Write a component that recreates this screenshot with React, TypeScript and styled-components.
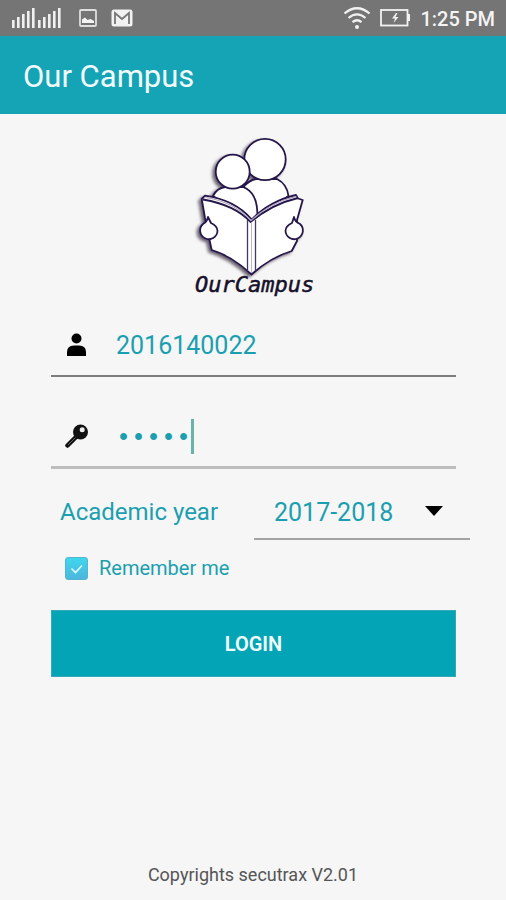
import React, { useState } from "react";
import styled, { createGlobalStyle } from "styled-components";

const teal = "#1b9fb0";

const GlobalStyle = createGlobalStyle`
  *, *::before, *::after { box-sizing: border-box; }
  body {
    margin: 0;
    background: #f6f6f6;
    font-family: Roboto, "Liberation Sans", sans-serif;
  }
`;

const Screen = styled.div`
  display: flex;
  flex-direction: column;
  min-height: 100vh;
`;

const StatusBar = styled.div`
  display: flex;
  align-items: center;
  justify-content: space-between;
  height: 36px;
  padding: 0 11px 0 12px;
  background: #757575;
  color: #f4f4f4;
`;

const StatusGroup = styled.div<{ $gap: number }>`
  display: flex;
  align-items: center;
  gap: ${({ $gap }) => $gap}px;
`;

const Clock = styled.time`
  font-size: 20px;
  font-weight: 500;
  line-height: 24px;
  padding-top: 2px;
`;

const AppBar = styled.header`
  display: flex;
  align-items: center;
  height: 78px;
  padding: 4px 23px 0;
  background: #14a4b6;
`;

const Title = styled.h1`
  margin: 0;
  color: #f2fbfc;
  font-size: 31px;
  font-weight: 400;
  line-height: 40px;
`;

const Main = styled.main`
  display: flex;
  flex: 1;
  flex-direction: column;
  padding: 16px 0 12px;
`;

const Logo = styled.svg`
  align-self: center;
`;

const Form = styled.form`
  display: flex;
  flex-direction: column;
  margin: 14px 50px 0 51px;
`;

const Field = styled.label<{ $line: string; $thick: number }>`
  display: flex;
  align-items: center;
  height: 63px;
  padding-left: 14px;
  border-bottom: ${({ $thick }) => $thick}px solid ${({ $line }) => $line};

  & + & { margin-top: 29px; }
`;

const TextInput = styled.input`
  flex: 1;
  min-width: 0;
  margin-left: 27px;
  padding: 2px 0 0;
  border: 0;
  outline: 0;
  background: transparent;
  color: ${teal};
  font: 400 25px/36px Roboto, "Liberation Sans", sans-serif;
`;

const PasswordInput = styled(TextInput)`
  flex: none;
  field-sizing: content;
  padding-top: 6px;
  font-family: "Liberation Mono", monospace;
  caret-color: transparent;
`;

const Caret = styled.span`
  width: 3px;
  height: 35px;
  background: #67b5a8;
`;

const YearRow = styled.div`
  display: flex;
  align-items: flex-start;
  justify-content: space-between;
  margin: 15px -14px 0 9px;
`;

const YearLabel = styled.label`
  color: ${teal};
  font-size: 24px;
  line-height: 56px;
`;

const SelectBox = styled.div`
  display: grid;
  align-items: center;
  width: 216px;
  border-bottom: 2px solid #a3a3a3;

  & > * { grid-area: 1 / 1; }
  & > svg { justify-self: end; margin-right: 26px; pointer-events: none; }
`;

const YearSelect = styled.select`
  width: 100%;
  height: 54px;
  padding: 4px 60px 0 20px;
  appearance: none;
  border: 0;
  outline: 0;
  background: transparent;
  color: ${teal};
  font: 400 25px/36px Roboto, "Liberation Sans", sans-serif;
`;

const Remember = styled.label`
  display: flex;
  align-items: center;
  gap: 11px;
  margin: 15px 0 0 14px;
  color: ${teal};
  font-size: 20px;
  line-height: 26px;
`;

const CheckBox = styled.span`
  display: grid;
  width: 23px;
  height: 23px;

  & > * { grid-area: 1 / 1; }
  & > svg { pointer-events: none; opacity: 0; }
  & > input:checked + svg { opacity: 1; }
`;

const Tick = styled.input`
  width: 23px;
  height: 23px;
  margin: 0;
  appearance: none;
  border: 1px solid #55b4d2;
  border-radius: 3px;
  background: linear-gradient(#3fd6ee, #4cb6dc);
`;

const LoginButton = styled.button`
  height: 67px;
  margin-top: 29px;
  padding: 0;
  border: 1px solid #35a9b5;
  background: #03a4b5;
  color: #f2fdfd;
  font: 600 20px/24px Roboto, "Liberation Sans", sans-serif;
`;

const Footer = styled.footer`
  margin-top: auto;
  color: #555;
  font-size: 18px;
  line-height: 26px;
  text-align: center;
`;

function SignalIcon() {
  const heights = [8, 11, 14, 17, 20];
  return (
    <svg width="50" height="22" viewBox="0 0 50 22" fill="#f0f0f0" aria-hidden="true">
      {[0, 26].map((x) =>
        heights.map((h, i) => (
          <rect key={`${x}-${h}`} x={x + i * 5} y={21 - h} width="2.6" height={h} />
        ))
      )}
    </svg>
  );
}

function ImageIcon() {
  return (
    <svg width="18" height="18" viewBox="0 0 18 18" aria-hidden="true">
      <rect x="1" y="1" width="16" height="16" rx="1" fill="none" stroke="#dedede" strokeWidth="1.8" />
      <path d="M3 14V10.500L6 8.500l2.500 2.500 3-1 3.500 2v2z" fill="#f4f4f4" />
    </svg>
  );
}

function MailIcon() {
  return (
    <svg width="22" height="18" viewBox="0 0 22 18" aria-hidden="true">
      <rect x="0.5" y="0.5" width="21" height="17" rx="2.5" fill="#f2f2f2" />
      <path d="M4 15V4l7 6 7-6v11" fill="none" stroke="#777" strokeWidth="1.8" />
    </svg>
  );
}

function WifiIcon() {
  return (
    <svg width="26" height="24" viewBox="1 0 26 24" fill="none" stroke="#f2f2f2" strokeWidth="2.2" aria-hidden="true">
      <path d="M1.500 7.500Q14-3 26.500 7.500M5.500 12Q14 4.800 22.500 12M9.500 16.200Q14 12.300 18.500 16.200" />
      <circle cx="14" cy="21" r="2" fill="#f2f2f2" stroke="none" />
    </svg>
  );
}

function BatteryIcon() {
  return (
    <svg width="30" height="18" viewBox="0 0 30 18" aria-hidden="true">
      <rect x="1" y="1" width="26.500" height="15.500" fill="none" stroke="#f2f2f2" strokeWidth="1.8" />
      <path d="M28 5h2v7h-2z" fill="#f2f2f2" />
      <path d="M16 4l-4 5.500h3L13.500 14l5-6h-3l2-4z" fill="#f2f2f2" />
    </svg>
  );
}

function CampusLogo() {
  return (
    <Logo width="130" height="170" viewBox="188 130 130 170" role="img" aria-label="OurCampus">
      <defs>
        <filter id="shade" x="-20%" y="-20%" width="140%" height="140%">
          <feDropShadow dx="-2.500" dy="2" stdDeviation="1.500" floodColor="#1c1626" floodOpacity="0.65" />
        </filter>
      </defs>
      <g filter="url(#shade)" fill="#fff" stroke="#25174a" strokeWidth="1.8" strokeLinejoin="round">
        <path d="M244 186Q250 180 256 179H277Q287 184 288.500 196L254 219Z" />
        <path d="M213 196Q217 188 225 187H243Q257 192 257.500 214L252 222Z" />
        <circle cx="265" cy="159.500" r="20.700" />
        <circle cx="232.700" cy="171.700" r="17" />
        <path d="M201.700 199L205 195.700Q235 200 251.700 219.500Q270 201 296 195L298 198.500L302.700 200L297 220V241L291.700 251Q271 257 251.500 274.500Q232 256 211.700 250L209.500 240L205 218Z" />
        <path d="M203 199.500Q235 205 250.500 222Q272 204 298 198" fill="none" />
        <path d="M205.500 197.500Q234 202 251 220.500Q271 202 296.500 196.500" fill="none" stroke="#a99fba" strokeWidth="1.200" />
        <path d="M247.500 220V271M255.500 220V271" fill="none" stroke="#443762" strokeWidth="1.300" />
        <path d="M251.500 222V273" fill="none" stroke="#bdb6cb" strokeWidth="1" />
        <path d="M208 217L211 223Q217.500 226 217.500 231A8.700 8.700 0 1 1 203 224Q207 222 208 217Z" />
        <path d="M294 217L292 223Q285.500 226 285.500 231A8.700 8.700 0 1 0 300 224Q295 222 294 217Z" />
      </g>
      <text x="195" y="292" fill="#16102a" stroke="#16102a" strokeWidth="0.5" fontFamily="DejaVu Sans Mono, monospace" fontSize="22" fontStyle="italic" fontWeight="400">
        OurCampus
      </text>
    </Logo>
  );
}

function PersonIcon() {
  return (
    <svg width="24" height="24" viewBox="0 0 24 24" aria-hidden="true">
      <circle cx="11.500" cy="5.500" r="5" />
      <path d="M2 23v-4q0-6.500 7-6.500h5q7 0 7 6.500v4z" />
    </svg>
  );
}

function KeyIcon() {
  return (
    <svg width="24" height="24" viewBox="0 0 24 24" aria-hidden="true">
      <path d="M2.500 21.500L11 13" stroke="#111" strokeWidth="4.500" strokeLinecap="round" />
      <path d="M3 21L11 13" stroke="#666" strokeWidth="1" />
      <circle cx="15.500" cy="8" r="7.500" fill="#111" />
      <circle cx="17.200" cy="5.800" r="2.500" fill="#eee" />
    </svg>
  );
}

export default function App() {
  const [user, setUser] = useState("2016140022");
  const [password, setPassword] = useState("12345");
  const [remember, setRemember] = useState(true);

  return (
    <Screen>
      <GlobalStyle />
      <StatusBar>
        <StatusGroup $gap={17}>
          <SignalIcon />
          <StatusGroup $gap={14}>
            <ImageIcon />
            <MailIcon />
          </StatusGroup>
        </StatusGroup>
        <StatusGroup $gap={10}>
          <WifiIcon />
          <BatteryIcon />
          <Clock>1:25 PM</Clock>
        </StatusGroup>
      </StatusBar>
      <AppBar>
        <Title>Our Campus</Title>
      </AppBar>
      <Main>
        <CampusLogo />
        <Form onSubmit={(e) => e.preventDefault()}>
          <Field $line="#7d7d7d" $thick={2}>
            <PersonIcon />
            <TextInput aria-label="User ID" value={user} onChange={(e) => setUser(e.target.value)} />
          </Field>
          <Field $line="#bdbdbd" $thick={3}>
            <KeyIcon />
            <PasswordInput
              type="password"
              aria-label="Password"
              value={password}
              onChange={(e) => setPassword(e.target.value)}
            />
            <Caret />
          </Field>
          <YearRow>
            <YearLabel htmlFor="year">Academic year</YearLabel>
            <SelectBox>
              <YearSelect id="year" defaultValue="2017-2018">
                <option>2017-2018</option>
              </YearSelect>
              <svg width="20" height="12" viewBox="0 0 20 12" aria-hidden="true">
                <path d="M1 1h18l-9 10z" />
              </svg>
            </SelectBox>
          </YearRow>
          <Remember>
            <CheckBox>
              <Tick type="checkbox" checked={remember} onChange={(e) => setRemember(e.target.checked)} />
              <svg width="23" height="23" viewBox="0 0 23 23" aria-hidden="true">
                <path d="M6.500 11.500l4 4 6.500-7" fill="none" stroke="#e4fbff" strokeWidth="1.600" />
              </svg>
            </CheckBox>
            Remember me
          </Remember>
          <LoginButton type="submit">LOGIN</LoginButton>
        </Form>
        <Footer>Copyrights secutrax V2.01</Footer>
      </Main>
    </Screen>
  );
}
